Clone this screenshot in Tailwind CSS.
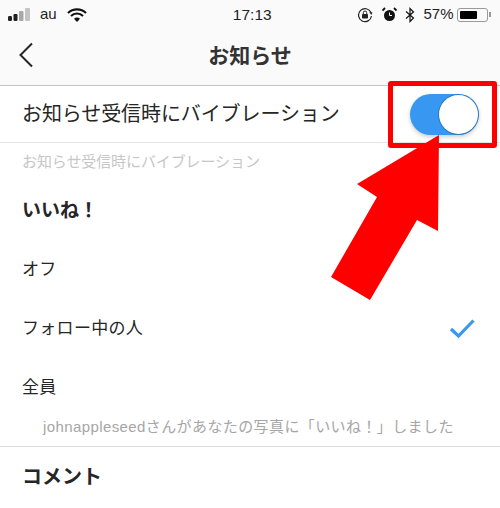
<!DOCTYPE html>
<html lang="ja">
<head>
  <meta charset="UTF-8" />
  <title>お知らせ</title>
  <script src="https://cdn.jsdelivr.net/npm/@tailwindcss/browser@4"></script>
</head>
<body class="bg-white">
  <div class="relative w-[500px] h-[508px] overflow-hidden bg-white text-[#262626] font-['Liberation_Sans','Noto_Sans_CJK_JP',sans-serif]">
    <!-- status bar + nav -->
    <header class="h-[86px] bg-[#fafafa] border-b border-[#c4c4c4]">
      <div class="h-[28px] pt-[1px] flex items-center justify-between px-2 text-[15px] text-[#222]">
        <div class="flex items-center w-[151px]">
          <svg width="23" height="14" viewBox="0 0 23 14" class="mr-[9px]">
            <rect x="0" y="8" width="4" height="5" rx="1.2" fill="#222"/>
            <rect x="5.5" y="6" width="4" height="7" rx="1.2" fill="#222"/>
            <rect x="11" y="3" width="4.5" height="10" rx="1" fill="#a8a8a8"/>
            <rect x="17" y="0" width="5" height="13" rx="1" fill="#c4c4c4"/>
          </svg>
          <span>au</span>
          <svg width="20" height="14" viewBox="0 0 20 14" class="ml-[10px]">
            <path d="M1 5 A13 13 0 0 1 19 5" fill="none" stroke="#111" stroke-width="2.2"/>
            <path d="M4 8 A8.5 8.5 0 0 1 16 8" fill="none" stroke="#111" stroke-width="2.2"/>
            <path d="M7 10.8 A4 4 0 0 1 13 10.8 L10 14 Z" fill="#111"/>
          </svg>
        </div>
        <span class="font-medium text-[15.5px] -ml-[12px]">17:13</span>
        <div class="flex items-center">
          <svg width="16" height="16" viewBox="0 0 16 16" class="mr-[9px]">
            <path d="M14 5.5 A6.5 6.5 0 1 0 14.5 9" fill="none" stroke="#222" stroke-width="1.2"/>
            <path d="M12.3 5.2 L15.5 5.2 L14.4 8 Z" fill="#222"/>
            <rect x="5" y="7" width="6" height="4.5" rx="0.8" fill="#222"/>
            <path d="M6.3 7 V5.7 A1.7 1.7 0 0 1 9.7 5.7 V7" fill="none" stroke="#222" stroke-width="1"/>
          </svg>
          <svg width="15" height="15" viewBox="0 0 15 15" class="mr-[8px]">
            <circle cx="7.5" cy="8.5" r="5.5" fill="#111"/>
            <path d="M7.5 5.5 V8.5 H10" fill="none" stroke="#fafafa" stroke-width="1"/>
            <path d="M0.5 3.5 L3 1 M14.5 3.5 L12 1" stroke="#111" stroke-width="1.8"/>
          </svg>
          <svg width="10" height="16" viewBox="0 0 10 16" class="mr-[8px]">
            <path d="M1 4.5 L8.5 11 L5 14.5 V1.5 L8.5 5 L1 11.5" fill="none" stroke="#111" stroke-width="1.2"/>
          </svg>
          <span class="mr-[4px]">57%</span>
          <div class="w-[31px] h-[14px] rounded-[3px] border border-[#999] p-[2px]">
            <div class="w-[17px] h-full bg-black rounded-[1px]"></div>
          </div>
          <div class="w-[1.5px] h-[5px] bg-[#999] ml-[1px] mr-[1px]"></div>
        </div>
      </div>
      <div class="relative h-[57px] flex items-center justify-center">
        <svg width="16" height="26" viewBox="0 0 16 26" class="absolute left-[18px] top-[14px]">
          <path d="M14 1.5 L2.5 13 L14 24.5" fill="none" stroke="#262626" stroke-width="2"/>
        </svg>
        <h1 class="text-[21px] font-bold text-[#333] -mt-[2px]">お知らせ</h1>
      </div>
    </header>

    <!-- vibration toggle -->
    <div class="h-[57px] flex items-center justify-between pl-[22px] pr-[21px] border-b border-[#e4e4e4]">
      <span class="text-[20px] tracking-[-0.1px]">お知らせ受信時にバイブレーション</span>
      <div class="relative w-[69px] h-[41px] rounded-full bg-[#3897f0] shadow-[0_2px_4px_rgba(0,0,0,0.2)] mt-[1px]">
        <div class="absolute right-[1px] top-[1px] w-[39px] h-[39px] rounded-full bg-white shadow-[0_0_0_1px_rgba(30,90,150,0.5)]"></div>
      </div>
    </div>
    <p class="pl-[22px] pt-[9px] text-[15px] leading-[20px] tracking-[-0.1px] text-[#c7c7c7]">お知らせ受信時にバイブレーション</p>

    <!-- likes options -->
    <section class="mt-[26px]">
      <h2 class="pl-[22px] text-[19px] leading-[26px] font-bold">いいね！</h2>
      <ul class="mt-[16px] text-[17px] tracking-[0.3px]">
        <li class="h-[59px] pl-[22px] flex items-center">オフ</li>
        <li class="h-[59px] pl-[22px] pr-[25px] flex items-center justify-between">
          <span>フォロー中の人</span>
          <svg width="26" height="21" viewBox="0 0 26 21">
            <path d="M2 11 L9.5 18 L24.5 2.5" fill="none" stroke="#3897f0" stroke-width="3.2"/>
          </svg>
        </li>
        <li class="h-[59px] pl-[22px] flex items-center">全員</li>
      </ul>
      <p class="pl-[43px] text-[15px] leading-[20px] tracking-[0.4px] text-[#a6a6a6]">johnappleseedさんがあなたの写真に「いいね！」しました</p>
    </section>

    <!-- comment section -->
    <section class="mt-[9px] border-t border-[#dcdcdc] pt-[17px]">
      <h2 class="pl-[22px] text-[20px] leading-[26px] font-bold">コメント</h2>
    </section>

    <!-- red annotation over the screenshot -->
    <div class="absolute left-[388px] top-[81px] w-[109px] h-[67px] border-[5px] border-[#ff0000] rounded-[3px]"></div>
    <svg class="absolute left-0 top-0" width="500" height="508" viewBox="0 0 500 508">
      <polygon points="439,135 357,184 377,197 331,277 370,300 417,220 438,231" fill="#ff0000"/>
    </svg>
  </div>
</body>
</html>
